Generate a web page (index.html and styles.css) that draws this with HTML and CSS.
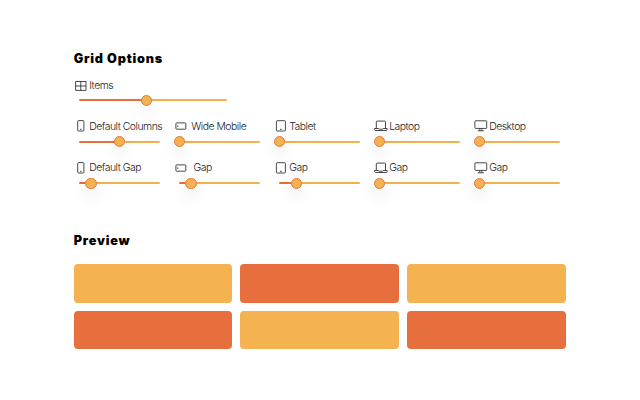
FILE: index.html
```html
<!DOCTYPE html>
<html lang="en">
<head>
<meta charset="utf-8">
<title>Grid Options</title>
<link rel="stylesheet" href="styles.css">
</head>
<body>
<svg class="defs" width="0" height="0" aria-hidden="true">
  <symbol id="grid" viewBox="0 0 14 12"><path d="M1.6 1.5h10.4v8.9H1.6zM6.8 1.5v8.9M1.6 6H12"/></symbol>
  <symbol id="phone" viewBox="0 0 14 12"><rect x="3.7" y=".6" width="6.2" height="10.4" rx=".8"/><path class="dot" d="M6.2 8.7h1.3v1.1H6.2z"/></symbol>
  <symbol id="wide" viewBox="0 0 14 12"><rect x="1.9" y="2.9" width="9.9" height="6.3" rx=".8"/><path class="dot" d="M3.1 5.5h1.1v1.2H3.1z"/></symbol>
  <symbol id="tablet" viewBox="0 0 14 12"><rect x="2.4" y=".7" width="9" height="10.3" rx=".8"/><path class="dot" d="M6.3 8.8h1.2v1.1H6.3z"/></symbol>
  <symbol id="laptop" viewBox="0 0 14 12"><path d="M2.3 8.3V1.9q0-.8.8-.8h7.6q.8 0 .8.8v6.4M.6 8.5h4l.5.7h3.6l.5-.7h4v.8q0 1.2-1.1 1.2H1.7Q.6 10.5.6 9.3z"/></symbol>
  <symbol id="desktop" viewBox="0 0 14 12"><rect x=".9" y=".8" width="11.8" height="7.6" rx=".6"/><path d="M5.8 8.4v2.2M7.8 8.4v2.2M3.8 10.8h6"/></symbol>
</svg>
<main>
  <h2>Grid Options</h2>
  <section class="controls">
    <div class="control items"><label><svg><use href="#grid"/></svg><span>Items</span></label><div class="slider" style="--value:67px"><i></i></div></div>
    <div class="control"><label><svg><use href="#phone"/></svg><span>Default Columns</span></label><div class="slider" style="--value:40.5px"><i></i></div></div>
    <div class="control"><label><svg><use href="#wide"/></svg><span class="inset">Wide Mobile</span></label><div class="slider" style="--value:0px"><i></i></div></div>
    <div class="control"><label><svg><use href="#tablet"/></svg><span>Tablet</span></label><div class="slider" style="--value:0px"><i></i></div></div>
    <div class="control"><label><svg><use href="#laptop"/></svg><span>Laptop</span></label><div class="slider" style="--value:0.3px"><i></i></div></div>
    <div class="control"><label><svg><use href="#desktop"/></svg><span>Desktop</span></label><div class="slider" style="--value:0.3px"><i></i></div></div>
    <div class="control"><label><svg><use href="#phone"/></svg><span>Default Gap</span></label><div class="slider" style="--value:11.7px"><i></i></div></div>
    <div class="control"><label><svg><use href="#wide"/></svg><span class="inset-more">Gap</span></label><div class="slider" style="--value:11.7px"><i></i></div></div>
    <div class="control"><label><svg><use href="#tablet"/></svg><span>Gap</span></label><div class="slider" style="--value:17.4px"><i></i></div></div>
    <div class="control"><label><svg><use href="#laptop"/></svg><span>Gap</span></label><div class="slider" style="--value:0.3px"><i></i></div></div>
    <div class="control"><label><svg><use href="#desktop"/></svg><span>Gap</span></label><div class="slider" style="--value:0.3px"><i></i></div></div>
  </section>
  <h2>Preview</h2>
  <section class="preview"><div></div><div></div><div></div><div></div><div></div><div></div></section>
</main>
</body>
</html>
```
FILE: styles.css
```css
* { box-sizing: border-box; }
body { margin: 0; background: #fff; color: #000; font-family: Inter, "Liberation Sans", sans-serif; }
.defs { display: block; }
main { width: 565.7px; padding: 50px 0 0 73.7px; }
h2 { margin: 0; font-size: 12.7px; line-height: 17px; font-weight: 900; letter-spacing: .77px; }
.controls { display: grid; grid-template-columns: repeat(5, 100px); grid-auto-rows: 41.5px; padding-top: 10.7px; height: 165px; }
.control { --track: 81px; }
.control.items { grid-column: 1 / -1; --track: 148px; }
label { display: flex; align-items: center; height: 14px; color: #222; font-size: 10.4px; font-weight: 300; letter-spacing: -.48px; white-space: nowrap; }
.items label { height: 15px; padding-top: 1px; }
.items .slider { margin-top: 6.8px; }
label svg { flex: none; width: 14px; height: 12px; margin-right: 1.5px; fill: none; stroke: #333; stroke-width: .9; }
.dot { fill: #333; stroke: none; }
.inset { margin-left: 2px; }
.inset-more { margin-left: 4.3px; }
.slider { position: relative; width: var(--track); height: 2px; margin: 7.6px 0 0 5.5px; border-radius: 1px; background: linear-gradient(90deg, #e76f3c var(--value), #f4b04e var(--value)); }
.slider i { position: absolute; left: var(--value); top: 1px; width: 11.4px; height: 11.4px; margin: -5.7px; border: 1.4px solid #e97841; border-radius: 50%; background: #f4b150; box-shadow: 0 8px 16px rgba(0, 0, 0, .1); }
.preview { display: grid; grid-template-columns: repeat(3, 1fr); grid-auto-rows: 38.5px; gap: 8.3px; padding-top: 15px; }
.preview div { border-radius: 4px; background: #f5b251; }
.preview div:nth-child(even) { background: #e76f3d; }
```
